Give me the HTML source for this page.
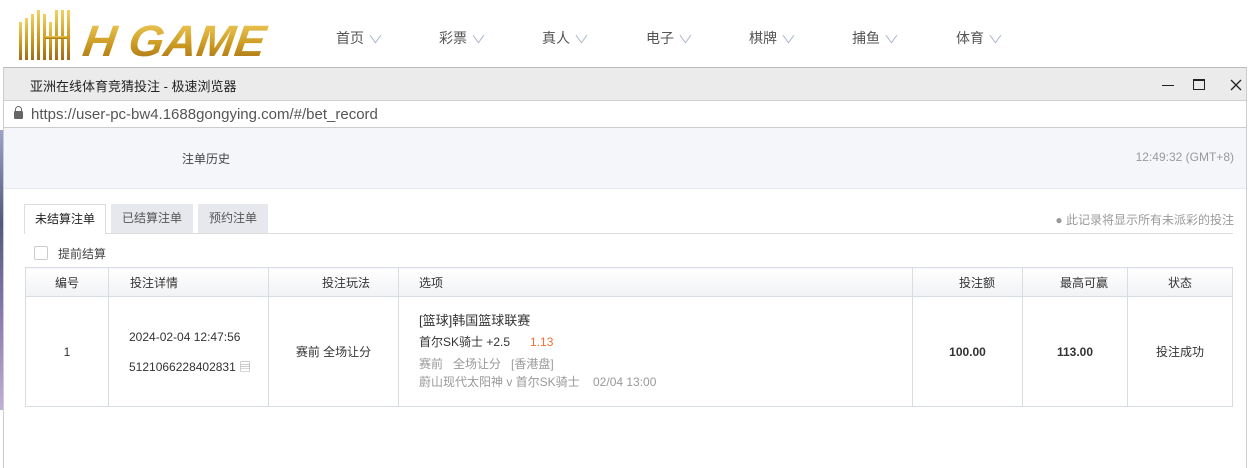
<!DOCTYPE html>
<html><head><meta charset="utf-8"><style>
*{margin:0;padding:0;box-sizing:border-box}
body{width:1250px;height:468px;overflow:hidden;background:#fff;font-family:"Liberation Sans","Noto Sans CJK SC",sans-serif;position:relative;font-size:12px;color:#333}
.abs{position:absolute}
.nav{top:28px;font-size:14px;color:#555}
.nav span{color:#a8b4c8;font-size:11px;margin-left:6px;display:inline-block;transform:scaleX(1.4)}
.win{left:3px;top:67px;width:1244px;height:401px;background:#fff;border-left:1px solid #ccc;border-right:1px solid #ccc;border-top:1px solid #bbb}
table{border-collapse:collapse;position:absolute;left:25px;top:267px;width:1208px}
td,th{border:1px solid #d8dce3;font-weight:normal;font-size:12px}
th{height:29px;background:linear-gradient(#fff,#f1f2f5)}
</style></head><body>
<div class="abs" style="left:0;top:130px;width:4px;height:280px;background:linear-gradient(#9aa4c8,#505a80,#8a7ab0,#c0b0d8)"></div>
<svg class="abs" style="left:15px;top:2px" width="265" height="62">
<defs><linearGradient id="g" x1="0" y1="0" x2="0" y2="1"><stop offset="0" stop-color="#f5d060"/><stop offset=".6" stop-color="#c8961e"/><stop offset="1" stop-color="#a06a1a"/></linearGradient></defs>
<g fill="url(#g)">
<rect x="4" y="20" width="3" height="38"/><rect x="10" y="16" width="3" height="42"/><rect x="16" y="12" width="3" height="46"/><rect x="22" y="8" width="3" height="50"/><rect x="28" y="12" width="3" height="46"/><rect x="34" y="20" width="3" height="38"/><rect x="40" y="8" width="3" height="50"/><rect x="46" y="8" width="3" height="50"/><rect x="52" y="8" width="3" height="50"/><rect x="30" y="34" width="22" height="3"/>
<text x="74" y="54" font-family="Liberation Sans" font-weight="bold" font-style="italic" font-size="44" transform="skewX(-8)" textLength="182" lengthAdjust="spacingAndGlyphs">H GAME</text>
</g></svg>
<div class="abs nav" style="left:336px">首页<span>∨</span></div>
<div class="abs nav" style="left:439px">彩票<span>∨</span></div>
<div class="abs nav" style="left:542px">真人<span>∨</span></div>
<div class="abs nav" style="left:646px">电子<span>∨</span></div>
<div class="abs nav" style="left:749px">棋牌<span>∨</span></div>
<div class="abs nav" style="left:852px">捕鱼<span>∨</span></div>
<div class="abs nav" style="left:956px">体育<span>∨</span></div>
<div class="abs win">
 <div style="height:33px;background:#ebebeb;border-bottom:1px solid #cfcfcf;position:relative">
  <div class="abs" style="left:26px;top:8px;font-size:13px;color:#222">亚洲在线体育竞猜投注 - 极速浏览器</div>
  <div class="abs" style="left:1158px;top:17px;width:12px;height:1px;background:#222"></div>
  <div class="abs" style="left:1189px;top:11px;width:12px;height:11px;border:1.5px solid #222;border-top-width:2px"></div>
  <svg class="abs" style="left:1226px;top:11px" width="12" height="12"><path d="M1 1L11 11M11 1L1 11" stroke="#222" stroke-width="1.3"/></svg>
 </div>
 <div style="height:27px;border-bottom:1px solid #ccc;position:relative">
  <div class="abs" style="left:10px;top:10px;width:9px;height:8px;background:#666;border-radius:1px"></div>
  <div class="abs" style="left:11px;top:5px;width:7px;height:7px;border:1.5px solid #666;border-radius:4px 4px 0 0;border-bottom:none"></div>
  <div class="abs" style="left:27px;top:5px;font-size:15px;color:#555">https://user-pc-bw4.1688gongying.com/#/bet_record</div>
 </div>
 <div style="height:61px;background:#f5f6fa;border-bottom:1px solid #e6e8ef;position:relative">
  <div class="abs" style="left:178px;top:22px;color:#444">注单历史</div>
  <div class="abs" style="right:12px;top:22px;color:#999">12:49:32 (GMT+8)</div>
 </div>
</div>
<div class="abs" style="left:25px;top:233px;width:1208px;height:1px;background:#ddd"></div>
<div class="abs" style="left:24px;top:204px;width:82px;height:30px;background:#fff;border:1px solid #ddd;border-bottom:none;text-align:center;line-height:29px;color:#222">未结算注单</div>
<div class="abs" style="left:111px;top:204px;width:82px;height:29px;background:#e6e8ee;text-align:center;line-height:29px;color:#555">已结算注单</div>
<div class="abs" style="left:198px;top:204px;width:70px;height:29px;background:#e6e8ee;text-align:center;line-height:29px;color:#555">预约注单</div>
<div class="abs" style="right:16px;top:211px;color:#999">● 此记录将显示所有未派彩的投注</div>
<div class="abs" style="left:34px;top:246px;width:14px;height:14px;border:1px solid #ccc;border-radius:2px"></div>
<div class="abs" style="left:58px;top:245px;color:#444">提前结算</div>
<table>
<tr><th style="width:83px">编号</th><th style="width:160px;text-align:left;padding-left:21px">投注详情</th><th style="width:130px;text-align:right;padding-right:28px">投注玩法</th><th style="width:514px;text-align:left;padding-left:20px">选项</th><th style="width:110px;text-align:left;padding-left:46px">投注额</th><th style="width:105px;text-align:left;padding-left:37px">最高可赢</th><th style="text-align:center">状态</th></tr>
<tr style="height:110px"><td style="text-align:center">1</td>
<td style="padding-left:20px;line-height:30px;color:#333">2024-02-04 12:47:56<br>5121066228402831 <span style="color:#999">▤</span></td>
<td style="text-align:center">赛前 全场让分</td>
<td style="padding-left:20px;line-height:18px;color:#333"><div style="font-size:13px;margin-bottom:3px">[篮球]韩国篮球联赛</div><div>首尔SK骑士 +2.5 &nbsp;&nbsp;&nbsp;&nbsp;&nbsp;<span style="color:#f07030">1.13</span></div><div style="color:#999;margin-top:4px">赛前 &nbsp; 全场让分 &nbsp; [香港盘]</div><div style="color:#999">蔚山现代太阳神 v 首尔SK骑士 &nbsp;&nbsp; 02/04 13:00</div></td>
<td style="text-align:center;font-weight:bold">100.00</td>
<td style="text-align:center;font-weight:bold">113.00</td>
<td style="text-align:center">投注成功</td></tr>
</table>
</body></html>
